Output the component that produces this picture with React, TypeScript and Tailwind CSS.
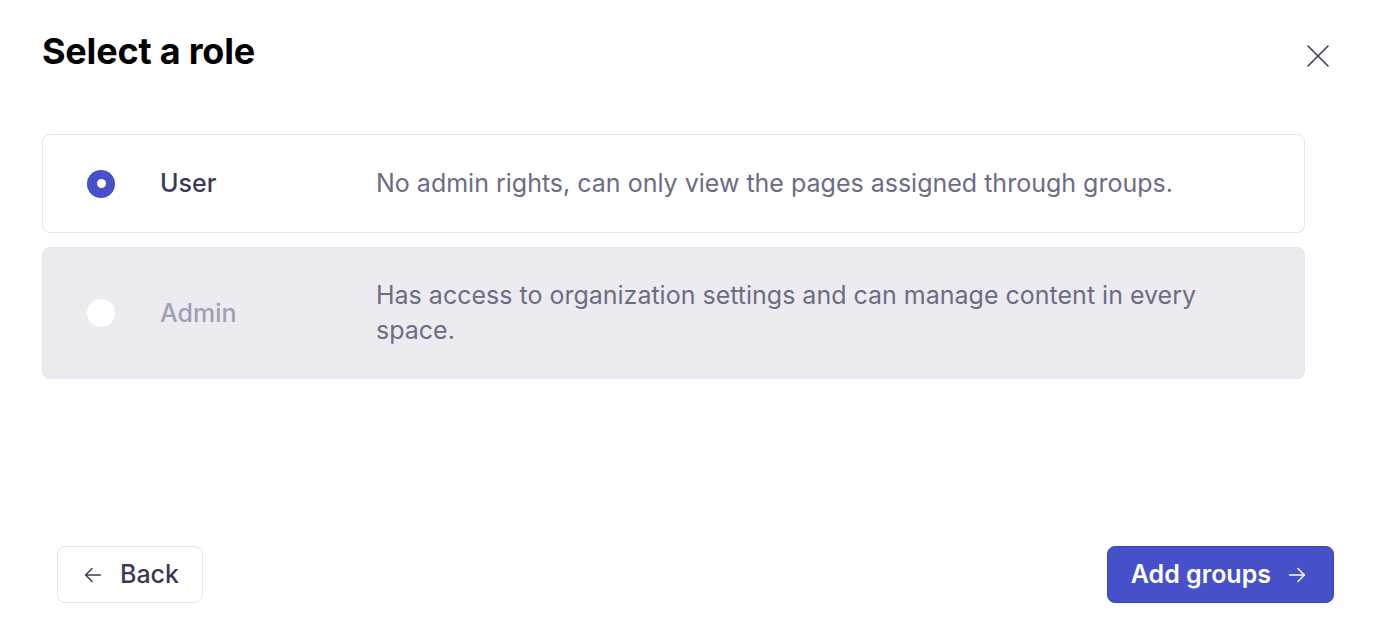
import React from "react";

function ArrowLeft() {
  return (
    <svg width="22" height="22" viewBox="0 0 24 24" fill="none" stroke="currentColor" strokeWidth="1.6" strokeLinecap="round" strokeLinejoin="round">
      <path d="M20 12H4" />
      <path d="M11 5l-7 7 7 7" />
    </svg>
  );
}

function ArrowRight() {
  return (
    <svg width="22" height="22" viewBox="0 0 24 24" fill="none" stroke="currentColor" strokeWidth="1.6" strokeLinecap="round" strokeLinejoin="round">
      <path d="M4 12h16" />
      <path d="M13 5l7 7-7 7" />
    </svg>
  );
}

export default function App() {
  return (
    <div
      className="w-full h-[626px] bg-white flex flex-col"
      style={{ fontFamily: "Inter, 'Noto Sans', sans-serif" }}
    >
      <div className="flex items-start justify-between pl-[42px] pr-[40px] pt-[29px]">
        <h1 className="text-[36px] leading-[44px] font-bold text-black tracking-[-0.2px]">
          Select a role
        </h1>
        <button className="mt-[15px] mr-[4px] text-[#3d3d5c]">
          <svg width="24" height="24" viewBox="0 0 24 24" fill="none" stroke="currentColor" strokeWidth="1.6" strokeLinecap="round">
            <path d="M2 2L22 22" />
            <path d="M22 2L2 22" />
          </svg>
        </button>
      </div>

      <div className="flex flex-col gap-[14px] pl-[42px] pr-[69px] mt-[61px]">
        <div className="flex items-center rounded-[8px] border border-[#e4e4ea] bg-white pl-[44px] pr-[44px] py-[31px]">
          <div className="w-[28px] h-[28px] rounded-full bg-[#4550c9] flex items-center justify-center shrink-0">
            <div className="w-[9px] h-[9px] rounded-full bg-white" />
          </div>
          <div className="w-[216px] pl-[45px] shrink-0 box-content text-[25px] leading-[35px] font-medium text-[#3a3a58]">
            User
          </div>
          <div className="flex-1 text-[25px] leading-[35px] text-[#6c6c86]">
            No admin rights, can only view the pages assigned through groups.
          </div>
        </div>

        <div className="flex items-center rounded-[8px] border border-[#e4e4ea] bg-[#ececf0] pl-[44px] pr-[44px] py-[30px]">
          <div className="w-[28px] h-[28px] rounded-full bg-white shrink-0" />
          <div className="w-[216px] pl-[45px] shrink-0 box-content text-[25px] leading-[35px] font-medium text-[#a09fb5]">
            Admin
          </div>
          <div className="flex-1 text-[25px] leading-[35px] text-[#6c6c86]">
            Has access to organization settings and can manage content in every space.
          </div>
        </div>
      </div>

      <div className="mt-auto mb-[23px] flex items-center justify-between pl-[57px] pr-[40px]">
        <button className="h-[57px] flex items-center gap-[16px] rounded-[8px] border border-[#e4e4ea] bg-white pl-[24px] pr-[23px] text-[#3a3a58]">
          <ArrowLeft />
          <span className="text-[25px] font-medium leading-none">Back</span>
        </button>
        <button className="h-[57px] flex items-center gap-[15px] rounded-[8px] bg-[#4550c9] border border-[#3b46bd] pl-[23px] pr-[25px] text-white">
          <span className="text-[25px] font-semibold leading-none">Add groups</span>
          <ArrowRight />
        </button>
      </div>
    </div>
  );
}
